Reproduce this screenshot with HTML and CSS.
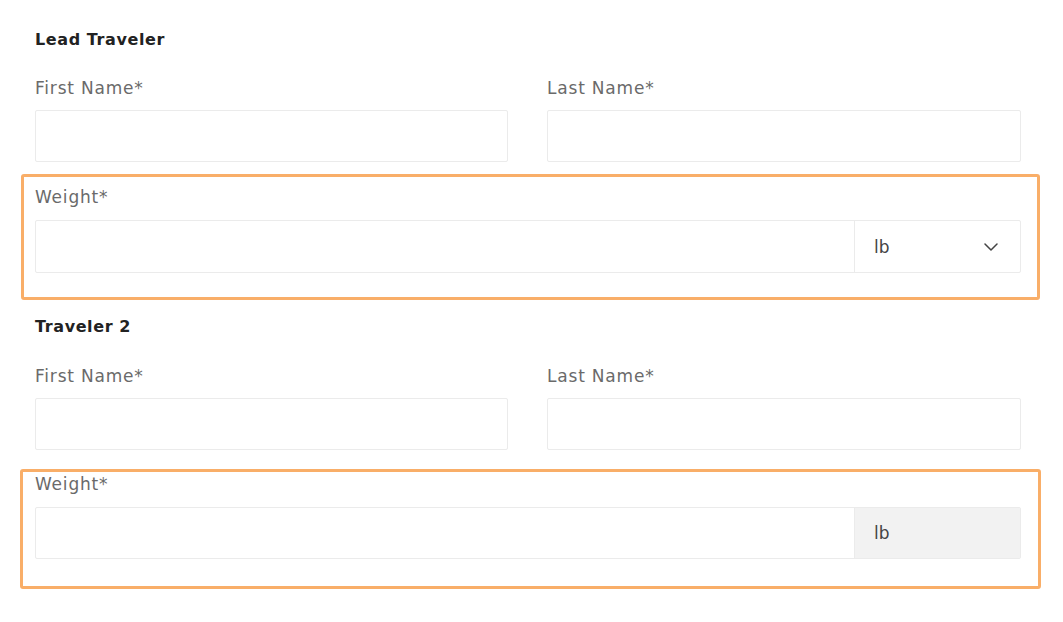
FILE: index.html
```html
<!DOCTYPE html>
<html lang="en">
<head>
<meta charset="utf-8">
<title>Travelers</title>
<link rel="stylesheet" href="styles.css">
</head>
<body>
<main class="form">
  <section class="traveler">
    <h3 class="traveler-title">Lead Traveler</h3>
    <div class="row">
      <div class="field">
        <label class="label">First Name*</label>
        <div class="input"></div>
      </div>
      <div class="field">
        <label class="label">Last Name*</label>
        <div class="input"></div>
      </div>
    </div>
    <div class="highlight highlight-a">
      <label class="label">Weight*</label>
      <div class="input weight">
        <div class="weight-value"></div>
        <div class="unit unit-select">
          <span>lb</span>
          <svg class="chevron" width="14" height="8" viewBox="0 0 14 8"><path d="M1 1l6 6 6-6" fill="none" stroke="#444" stroke-width="1.5" stroke-linecap="round" stroke-linejoin="round"/></svg>
        </div>
      </div>
    </div>
  </section>
  <section class="traveler">
    <h3 class="traveler-title second">Traveler 2</h3>
    <div class="row">
      <div class="field">
        <label class="label">First Name*</label>
        <div class="input"></div>
      </div>
      <div class="field">
        <label class="label">Last Name*</label>
        <div class="input"></div>
      </div>
    </div>
    <div class="highlight highlight-b">
      <label class="label">Weight*</label>
      <div class="input weight">
        <div class="weight-value"></div>
        <div class="unit unit-fixed"><span>lb</span></div>
      </div>
    </div>
  </section>
</main>
</body>
</html>
```
FILE: styles.css
```css
* { box-sizing: border-box; }
html, body { margin: 0; padding: 0; background: #fff; }
body { font-family: "DejaVu Sans", "Open Sans", sans-serif; }
.form { width: 986px; margin-left: 35px; padding-top: 28px; }
.traveler-title {
  margin: 0 0 24px;
  font-size: 16px;
  line-height: 24px;
  font-weight: 700;
  letter-spacing: 0.6px;
  color: #222;
}
.traveler-title.second { margin-top: 15px; margin-bottom: 25px; }
.row { display: grid; grid-template-columns: 473px 474px; column-gap: 39px; }
.field { display: flex; flex-direction: column; }
.label {
  display: block;
  font-size: 17px;
  line-height: 24px;
  letter-spacing: 0.8px;
  color: #6a6a6a;
  margin-bottom: 11px;
}
.row .label { margin-bottom: 10px; }
.input {
  height: 52px;
  border: 1px solid #ebebeb;
  border-radius: 2px;
  background: #fff;
}
.highlight {
  border: 3px solid #f9ae68;
  border-radius: 3px;
}
.highlight-a { margin: 12px -19px 0 -14px; padding: 8px 16px 24px 11px; }
.highlight-b { margin: 19px -20px 0 -15px; padding: 0 16px 27px 12px; }
.weight { display: flex; height: 53px; }
.highlight-b .weight { height: 52px; margin-right: 1px; }
.weight-value { flex: 1; }
.unit {
  width: 166px;
  border-left: 1px solid #ebebeb;
  display: flex;
  align-items: center;
  justify-content: space-between;
  padding: 0 22px 0 19px;
  font-size: 17px;
  color: #444;
}
.unit-fixed { background: #f2f2f2; }
.chevron { display: block; }
```
